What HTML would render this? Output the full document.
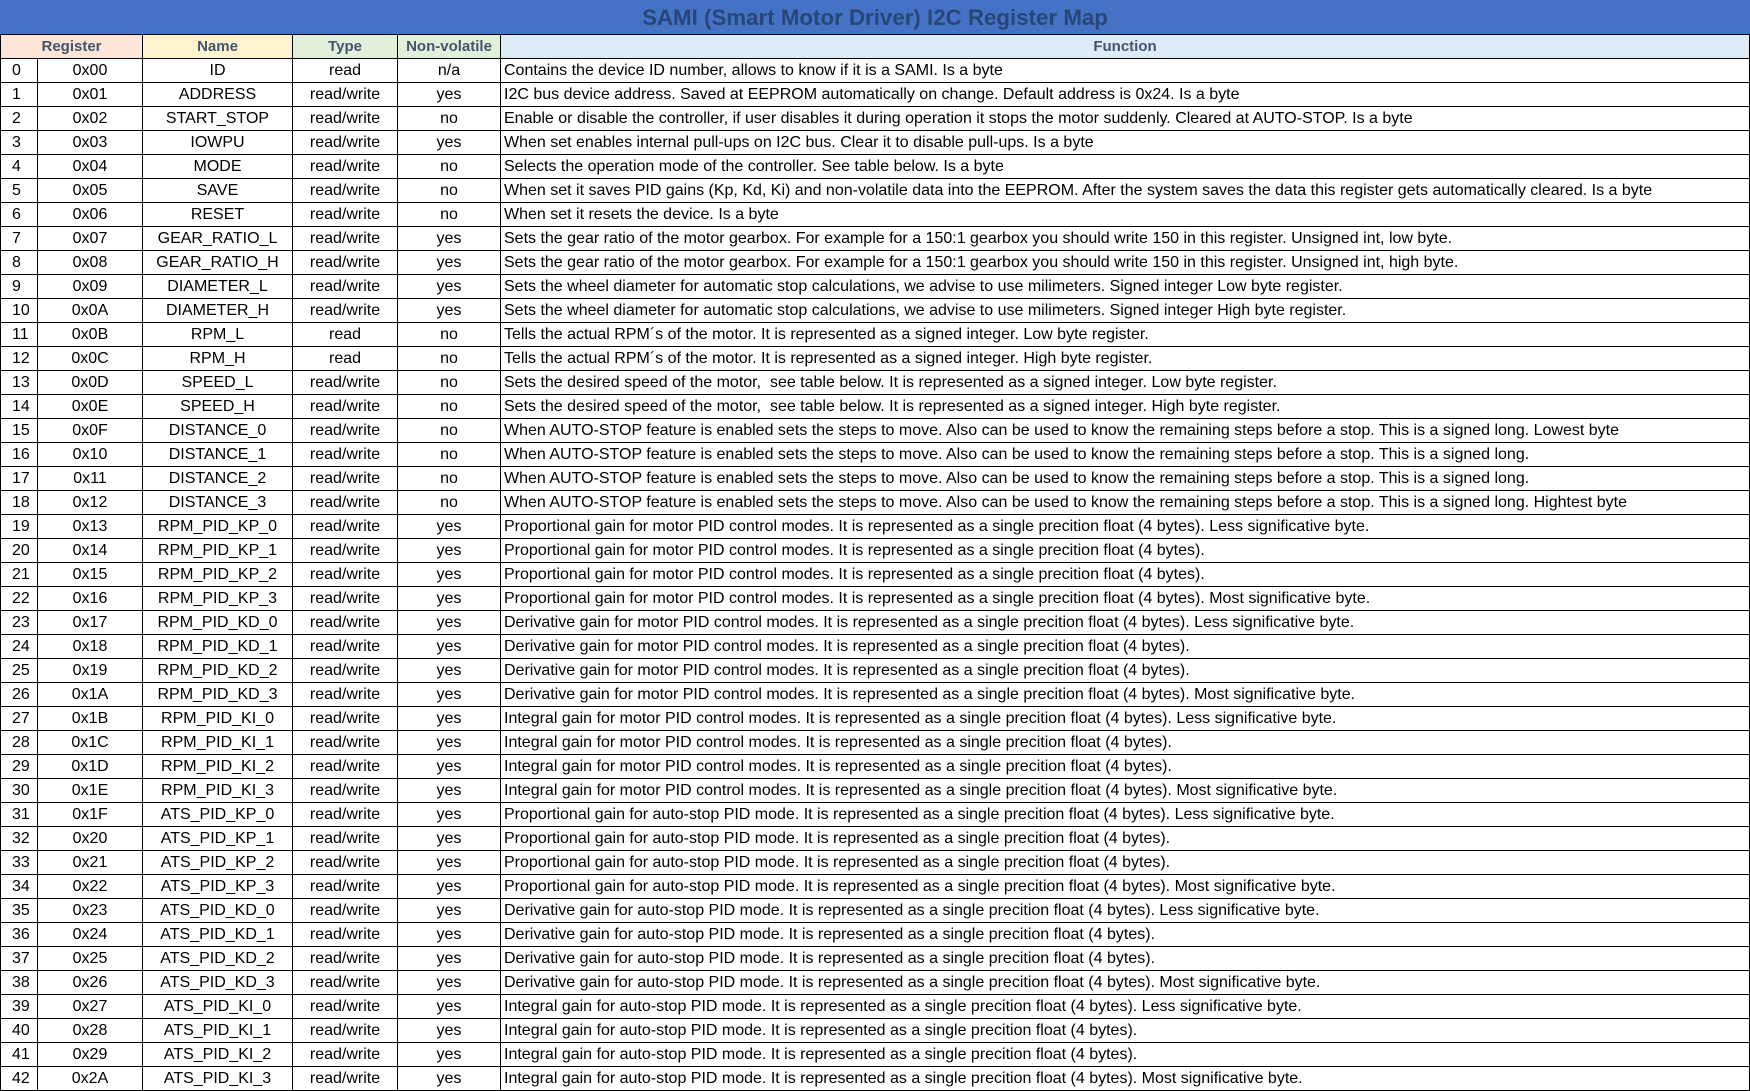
<!DOCTYPE html>
<html><head><meta charset="utf-8"><style>
html,body{margin:0;padding:0;background:#fff;}
body{width:1750px;height:1091px;overflow:hidden;font-family:"Liberation Sans",Arial,sans-serif;}
.title{height:35px;background:#4472c4;color:#2a4677;font-weight:bold;font-size:22.3px;text-align:center;line-height:35px;box-sizing:border-box;border-bottom:1px solid #000;}
table{border-collapse:collapse;table-layout:fixed;width:1749px;font-size:16px;color:#000;}
td{border:1px solid #000;height:23px;padding:0;text-align:center;white-space:nowrap;overflow:hidden;line-height:23px;}
td.f{text-align:left;padding-left:3px;}
td.n{text-align:left;padding-left:11px;}
tr.h td{height:23px;font-weight:bold;color:#44546a;border-top:none;border-bottom:1.5px solid #000;font-size:15px;}
</style></head><body>
<div class="title">SAMI (Smart Motor Driver) I2C Register Map</div>
<table>
<colgroup><col style="width:37px"><col style="width:105px"><col style="width:150px"><col style="width:105px"><col style="width:103px"><col style="width:1249px"></colgroup>
<tr class="h"><td colspan="2" style="background:#fce4d6">Register</td><td style="background:#fff2cc">Name</td><td style="background:#e2efda">Type</td><td style="background:#e2efda">Non-volatile</td><td style="background:#ddebf7">Function</td></tr>
<tr><td class="n">0</td><td>0x00</td><td>ID</td><td>read</td><td>n/a</td><td class="f">Contains the device ID number, allows to know if it is a SAMI. Is a byte</td></tr>
<tr><td class="n">1</td><td>0x01</td><td>ADDRESS</td><td>read/write</td><td>yes</td><td class="f">I2C bus device address. Saved at EEPROM automatically on change. Default address is 0x24. Is a byte</td></tr>
<tr><td class="n">2</td><td>0x02</td><td>START_STOP</td><td>read/write</td><td>no</td><td class="f">Enable or disable the controller, if user disables it during operation it stops the motor suddenly. Cleared at AUTO-STOP. Is a byte</td></tr>
<tr><td class="n">3</td><td>0x03</td><td>IOWPU</td><td>read/write</td><td>yes</td><td class="f">When set enables internal pull-ups on I2C bus. Clear it to disable pull-ups. Is a byte</td></tr>
<tr><td class="n">4</td><td>0x04</td><td>MODE</td><td>read/write</td><td>no</td><td class="f">Selects the operation mode of the controller. See table below. Is a byte</td></tr>
<tr><td class="n">5</td><td>0x05</td><td>SAVE</td><td>read/write</td><td>no</td><td class="f">When set it saves PID gains (Kp, Kd, Ki) and non-volatile data into the EEPROM. After the system saves the data this register gets automatically cleared. Is a byte</td></tr>
<tr><td class="n">6</td><td>0x06</td><td>RESET</td><td>read/write</td><td>no</td><td class="f">When set it resets the device. Is a byte</td></tr>
<tr><td class="n">7</td><td>0x07</td><td>GEAR_RATIO_L</td><td>read/write</td><td>yes</td><td class="f">Sets the gear ratio of the motor gearbox. For example for a 150:1 gearbox you should write 150 in this register. Unsigned int, low byte.</td></tr>
<tr><td class="n">8</td><td>0x08</td><td>GEAR_RATIO_H</td><td>read/write</td><td>yes</td><td class="f">Sets the gear ratio of the motor gearbox. For example for a 150:1 gearbox you should write 150 in this register. Unsigned int, high byte.</td></tr>
<tr><td class="n">9</td><td>0x09</td><td>DIAMETER_L</td><td>read/write</td><td>yes</td><td class="f">Sets the wheel diameter for automatic stop calculations, we advise to use milimeters. Signed integer Low byte register.</td></tr>
<tr><td class="n">10</td><td>0x0A</td><td>DIAMETER_H</td><td>read/write</td><td>yes</td><td class="f">Sets the wheel diameter for automatic stop calculations, we advise to use milimeters. Signed integer High byte register.</td></tr>
<tr><td class="n">11</td><td>0x0B</td><td>RPM_L</td><td>read</td><td>no</td><td class="f">Tells the actual RPM´s of the motor. It is represented as a signed integer. Low byte register.</td></tr>
<tr><td class="n">12</td><td>0x0C</td><td>RPM_H</td><td>read</td><td>no</td><td class="f">Tells the actual RPM´s of the motor. It is represented as a signed integer. High byte register.</td></tr>
<tr><td class="n">13</td><td>0x0D</td><td>SPEED_L</td><td>read/write</td><td>no</td><td class="f">Sets the desired speed of the motor,&nbsp; see table below. It is represented as a signed integer. Low byte register.</td></tr>
<tr><td class="n">14</td><td>0x0E</td><td>SPEED_H</td><td>read/write</td><td>no</td><td class="f">Sets the desired speed of the motor,&nbsp; see table below. It is represented as a signed integer. High byte register.</td></tr>
<tr><td class="n">15</td><td>0x0F</td><td>DISTANCE_0</td><td>read/write</td><td>no</td><td class="f">When AUTO-STOP feature is enabled sets the steps to move. Also can be used to know the remaining steps before a stop. This is a signed long. Lowest byte</td></tr>
<tr><td class="n">16</td><td>0x10</td><td>DISTANCE_1</td><td>read/write</td><td>no</td><td class="f">When AUTO-STOP feature is enabled sets the steps to move. Also can be used to know the remaining steps before a stop. This is a signed long.</td></tr>
<tr><td class="n">17</td><td>0x11</td><td>DISTANCE_2</td><td>read/write</td><td>no</td><td class="f">When AUTO-STOP feature is enabled sets the steps to move. Also can be used to know the remaining steps before a stop. This is a signed long.</td></tr>
<tr><td class="n">18</td><td>0x12</td><td>DISTANCE_3</td><td>read/write</td><td>no</td><td class="f">When AUTO-STOP feature is enabled sets the steps to move. Also can be used to know the remaining steps before a stop. This is a signed long. Hightest byte</td></tr>
<tr><td class="n">19</td><td>0x13</td><td>RPM_PID_KP_0</td><td>read/write</td><td>yes</td><td class="f">Proportional gain for motor PID control modes. It is represented as a single precition float (4 bytes). Less significative byte.</td></tr>
<tr><td class="n">20</td><td>0x14</td><td>RPM_PID_KP_1</td><td>read/write</td><td>yes</td><td class="f">Proportional gain for motor PID control modes. It is represented as a single precition float (4 bytes).</td></tr>
<tr><td class="n">21</td><td>0x15</td><td>RPM_PID_KP_2</td><td>read/write</td><td>yes</td><td class="f">Proportional gain for motor PID control modes. It is represented as a single precition float (4 bytes).</td></tr>
<tr><td class="n">22</td><td>0x16</td><td>RPM_PID_KP_3</td><td>read/write</td><td>yes</td><td class="f">Proportional gain for motor PID control modes. It is represented as a single precition float (4 bytes). Most significative byte.</td></tr>
<tr><td class="n">23</td><td>0x17</td><td>RPM_PID_KD_0</td><td>read/write</td><td>yes</td><td class="f">Derivative gain for motor PID control modes. It is represented as a single precition float (4 bytes). Less significative byte.</td></tr>
<tr><td class="n">24</td><td>0x18</td><td>RPM_PID_KD_1</td><td>read/write</td><td>yes</td><td class="f">Derivative gain for motor PID control modes. It is represented as a single precition float (4 bytes).</td></tr>
<tr><td class="n">25</td><td>0x19</td><td>RPM_PID_KD_2</td><td>read/write</td><td>yes</td><td class="f">Derivative gain for motor PID control modes. It is represented as a single precition float (4 bytes).</td></tr>
<tr><td class="n">26</td><td>0x1A</td><td>RPM_PID_KD_3</td><td>read/write</td><td>yes</td><td class="f">Derivative gain for motor PID control modes. It is represented as a single precition float (4 bytes). Most significative byte.</td></tr>
<tr><td class="n">27</td><td>0x1B</td><td>RPM_PID_KI_0</td><td>read/write</td><td>yes</td><td class="f">Integral gain for motor PID control modes. It is represented as a single precition float (4 bytes). Less significative byte.</td></tr>
<tr><td class="n">28</td><td>0x1C</td><td>RPM_PID_KI_1</td><td>read/write</td><td>yes</td><td class="f">Integral gain for motor PID control modes. It is represented as a single precition float (4 bytes).</td></tr>
<tr><td class="n">29</td><td>0x1D</td><td>RPM_PID_KI_2</td><td>read/write</td><td>yes</td><td class="f">Integral gain for motor PID control modes. It is represented as a single precition float (4 bytes).</td></tr>
<tr><td class="n">30</td><td>0x1E</td><td>RPM_PID_KI_3</td><td>read/write</td><td>yes</td><td class="f">Integral gain for motor PID control modes. It is represented as a single precition float (4 bytes). Most significative byte.</td></tr>
<tr><td class="n">31</td><td>0x1F</td><td>ATS_PID_KP_0</td><td>read/write</td><td>yes</td><td class="f">Proportional gain for auto-stop PID mode. It is represented as a single precition float (4 bytes). Less significative byte.</td></tr>
<tr><td class="n">32</td><td>0x20</td><td>ATS_PID_KP_1</td><td>read/write</td><td>yes</td><td class="f">Proportional gain for auto-stop PID mode. It is represented as a single precition float (4 bytes).</td></tr>
<tr><td class="n">33</td><td>0x21</td><td>ATS_PID_KP_2</td><td>read/write</td><td>yes</td><td class="f">Proportional gain for auto-stop PID mode. It is represented as a single precition float (4 bytes).</td></tr>
<tr><td class="n">34</td><td>0x22</td><td>ATS_PID_KP_3</td><td>read/write</td><td>yes</td><td class="f">Proportional gain for auto-stop PID mode. It is represented as a single precition float (4 bytes). Most significative byte.</td></tr>
<tr><td class="n">35</td><td>0x23</td><td>ATS_PID_KD_0</td><td>read/write</td><td>yes</td><td class="f">Derivative gain for auto-stop PID mode. It is represented as a single precition float (4 bytes). Less significative byte.</td></tr>
<tr><td class="n">36</td><td>0x24</td><td>ATS_PID_KD_1</td><td>read/write</td><td>yes</td><td class="f">Derivative gain for auto-stop PID mode. It is represented as a single precition float (4 bytes).</td></tr>
<tr><td class="n">37</td><td>0x25</td><td>ATS_PID_KD_2</td><td>read/write</td><td>yes</td><td class="f">Derivative gain for auto-stop PID mode. It is represented as a single precition float (4 bytes).</td></tr>
<tr><td class="n">38</td><td>0x26</td><td>ATS_PID_KD_3</td><td>read/write</td><td>yes</td><td class="f">Derivative gain for auto-stop PID mode. It is represented as a single precition float (4 bytes). Most significative byte.</td></tr>
<tr><td class="n">39</td><td>0x27</td><td>ATS_PID_KI_0</td><td>read/write</td><td>yes</td><td class="f">Integral gain for auto-stop PID mode. It is represented as a single precition float (4 bytes). Less significative byte.</td></tr>
<tr><td class="n">40</td><td>0x28</td><td>ATS_PID_KI_1</td><td>read/write</td><td>yes</td><td class="f">Integral gain for auto-stop PID mode. It is represented as a single precition float (4 bytes).</td></tr>
<tr><td class="n">41</td><td>0x29</td><td>ATS_PID_KI_2</td><td>read/write</td><td>yes</td><td class="f">Integral gain for auto-stop PID mode. It is represented as a single precition float (4 bytes).</td></tr>
<tr><td class="n">42</td><td>0x2A</td><td>ATS_PID_KI_3</td><td>read/write</td><td>yes</td><td class="f">Integral gain for auto-stop PID mode. It is represented as a single precition float (4 bytes). Most significative byte.</td></tr>
</table>
</body></html>
